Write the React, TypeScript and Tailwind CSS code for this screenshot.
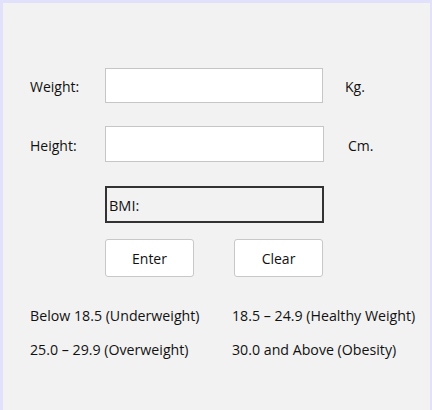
export default function App() {
  const font = { fontFamily: '"Segoe UI", "Open Sans", sans-serif' };
  return (
    <div
      className="w-[432px] h-[410px] bg-[#f2f2f2] border-t-[3px] border-l-[3px] border-r-[2px] border-[#e1e1fb] text-[#111] text-[14px] overflow-hidden"
      style={font}
    >
      <div className="pl-[27px] pt-[65px]">
        {/* Weight */}
        <div className="flex items-center h-[35px]">
          <span className="w-[75px] pt-[2px]">Weight:</span>
          <input className="w-[218px] h-[35px] bg-white border border-[#c6c6c6] outline-none" />
          <span className="ml-[22px] pt-[2px]">Kg.</span>
        </div>
        {/* Height */}
        <div className="flex items-center h-[36px] mt-[23px]">
          <span className="w-[75px] pt-[2px]">Height:</span>
          <input className="w-[219px] h-[36px] bg-white border border-[#c6c6c6] outline-none" />
          <span className="ml-[24px] pt-[2px]">Cm.</span>
        </div>
        {/* BMI */}
        <div className="ml-[75px] mt-[24px] w-[219px] h-[37px] border-2 border-[#333] flex items-center pl-[2px] pt-[2px] text-[14.5px]">
          BMI:
        </div>
        {/* Buttons */}
        <div className="ml-[75px] mt-[16px] flex gap-[40px]">
          <button className="w-[89px] h-[38px] bg-white border border-[#c8c8c8] rounded-[3px]">Enter</button>
          <button className="w-[89px] h-[38px] bg-white border border-[#c8c8c8] rounded-[3px]">Clear</button>
        </div>
        {/* Legend */}
        <div className="mt-[29px] grid grid-cols-[202px_auto] gap-y-[14px] leading-[20px] text-[14.2px]">
          <span>Below 18.5 (Underweight)</span>
          <span>18.5 – 24.9 (Healthy Weight)</span>
          <span>25.0 – 29.9 (Overweight)</span>
          <span>30.0 and Above (Obesity)</span>
        </div>
      </div>
    </div>
  );
}
